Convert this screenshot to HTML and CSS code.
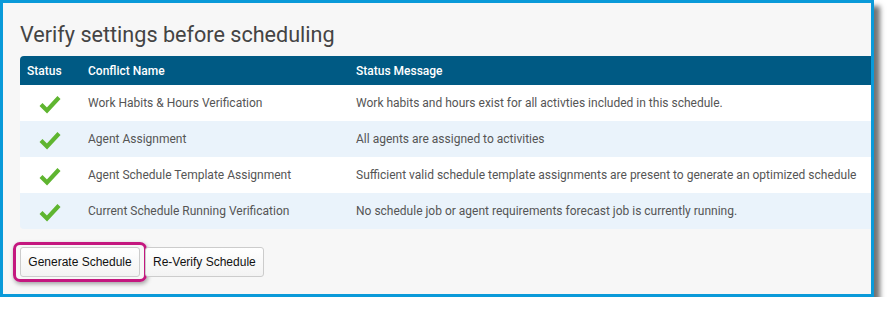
FILE: index.html
```
<!DOCTYPE html>
<html>
<head>
<meta charset="utf-8">
<link rel="stylesheet" href="styles.css">
</head>
<body>
<div class="frame">
  <h1 class="title">Verify settings before scheduling</h1>
  <table class="grid">
    <thead>
      <tr>
        <th class="c-status">Status</th>
        <th class="c-name">Conflict Name</th>
        <th class="c-msg">Status Message</th>
      </tr>
    </thead>
    <tbody>
      <tr>
        <td class="c-status"><svg class="check" viewBox="0 0 24 20"><path d="M3 10.5 L9 16.5 L21 3.5"/></svg></td>
        <td>Work Habits &amp; Hours Verification</td>
        <td>Work habits and hours exist for all activties included in this schedule.</td>
      </tr>
      <tr class="alt">
        <td class="c-status"><svg class="check" viewBox="0 0 24 20"><path d="M3 10.5 L9 16.5 L21 3.5"/></svg></td>
        <td>Agent Assignment</td>
        <td>All agents are assigned to activities</td>
      </tr>
      <tr>
        <td class="c-status"><svg class="check" viewBox="0 0 24 20"><path d="M3 10.5 L9 16.5 L21 3.5"/></svg></td>
        <td>Agent Schedule Template Assignment</td>
        <td>Sufficient valid schedule template assignments are present to generate an optimized schedule</td>
      </tr>
      <tr class="alt last">
        <td class="c-status"><svg class="check" viewBox="0 0 24 20"><path d="M3 10.5 L9 16.5 L21 3.5"/></svg></td>
        <td>Current Schedule Running Verification</td>
        <td>No schedule job or agent requirements forecast job is currently running.</td>
      </tr>
    </tbody>
  </table>
  <div class="actions">
    <div class="highlight"><button class="btn">Generate Schedule</button></div>
    <button class="btn">Re-Verify Schedule</button>
  </div>
</div>
</body>
</html>
```
FILE: styles.css
```
html, body {
  margin: 0;
  padding: 0;
  background: #ffffff;
}
.frame {
  box-sizing: border-box;
  width: 874px;
  height: 297px;
  border: 3px solid #0a9ad9;
  background: #f7f7f7;
  box-shadow: 6px 6px 5px rgba(0, 0, 0, 0.55);
  padding: 0 0 0 17px;
  overflow: hidden;
  font-family: Roboto, "Liberation Sans", sans-serif;
}
.title {
  margin: 0;
  padding-top: 18px;
  height: 35px;
  font-size: 21.6px;
  font-weight: 400;
  line-height: 28px;
  color: #444444;
  white-space: nowrap;
}
.grid {
  width: 852px;
  table-layout: fixed;
  border-collapse: separate;
  border-spacing: 0;
  font-size: 12px;
  color: #555555;
  white-space: nowrap;
}
.grid th {
  background: #005a84;
  color: #ffffff;
  font-weight: 500;
  text-align: left;
  height: 29px;
  padding: 0 0 0 7px;
}
.grid thead th:first-child {
  border-top-left-radius: 4px;
}
.grid td {
  height: 36px;
  padding: 0 0 0 7px;
  background: #ffffff;
  overflow: hidden;
}
.grid tr.alt td {
  background: #eaf3fb;
}
.grid tr.last td:first-child {
  border-bottom-left-radius: 4px;
}
.c-status {
  width: 54px;
}
.c-name {
  width: 261px;
}
.grid td.c-status {
  padding: 0;
}
.check {
  display: block;
  width: 24px;
  height: 20px;
  margin: 1px 0 0 18px;
}
.check path {
  fill: none;
  stroke: #5fb530;
  stroke-width: 4.2;
  stroke-linecap: butt;
  stroke-linejoin: miter;
}
.actions {
  display: flex;
  align-items: center;
  gap: 5px;
  margin-top: 13px;
}
.highlight {
  margin-left: -7px;
  margin-right: -7px;
  padding: 2px 4px;
  border: 3px solid #c4177f;
  border-radius: 7px;
  box-shadow: 1px 2px 4px rgba(0, 0, 0, 0.35);
  display: flex;
}
.btn {
  box-sizing: border-box;
  height: 30px;
  padding: 0 7px;
  font-family: "Liberation Sans", Arial, sans-serif;
  font-size: 12px;
  color: #111111;
  background: linear-gradient(#ffffff, #f3f3f3);
  border: 1px solid #cccccc;
  border-radius: 3px;
  white-space: nowrap;
}
.highlight .btn {
  width: 120px;
}
```
